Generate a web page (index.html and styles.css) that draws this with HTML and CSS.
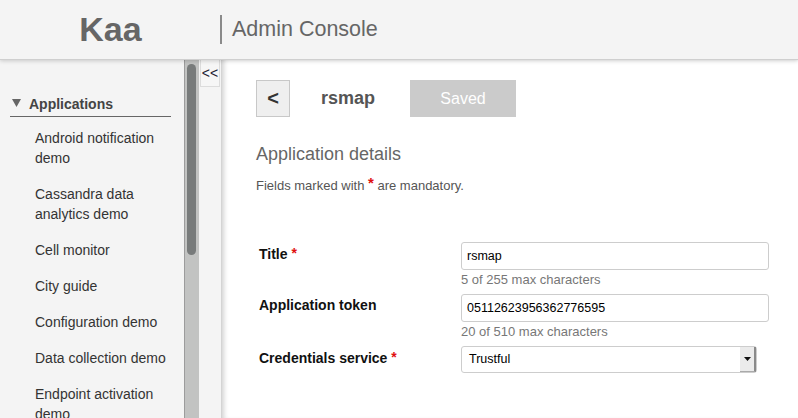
FILE: index.html
```html
<!DOCTYPE html>
<html>
<head>
<meta charset="utf-8">
<link rel="stylesheet" href="styles.css">
</head>
<body>
<header class="topbar">
  <div class="brand">Kaa</div>
  <div class="divider"></div>
  <div class="console">Admin Console</div>
</header>
<div class="main">
  <nav class="sidebar">
    <div class="nav-head">
      <svg class="tri" width="9" height="8" viewBox="0 0 9 8"><path d="M0 0H9L4.5 8Z" fill="#666"/></svg>
      <span>Applications</span>
    </div>
    <ul class="nav-list">
      <li>Android notification demo</li>
      <li>Cassandra data analytics demo</li>
      <li>Cell monitor</li>
      <li>City guide</li>
      <li>Configuration demo</li>
      <li>Data collection demo</li>
      <li>Endpoint activation demo</li>
    </ul>
  </nav>
  <div class="scrollbar"><div class="thumb"></div></div>
  <div class="collapse"><div class="collapse-btn">&lt;&lt;</div></div>
  <main class="content">
    <div class="toolbar">
      <div class="back-btn">&lt;</div>
      <div class="app-name">rsmap</div>
      <div class="saved-btn">Saved</div>
    </div>
    <h2 class="section-title">Application details</h2>
    <p class="note">Fields marked with <span class="req">*</span> are mandatory.</p>
    <div class="form">
      <div class="label">Title <span class="req">*</span></div>
      <div class="field">
        <div class="input">rsmap</div>
        <div class="help">5 of 255 max characters</div>
      </div>
      <div class="label">Application token</div>
      <div class="field">
        <div class="input">05112623956362776595</div>
        <div class="help">20 of 510 max characters</div>
      </div>
      <div class="label">Credentials service <span class="req">*</span></div>
      <div class="field">
        <div class="select"><span class="select-text">Trustful</span><span class="select-arrow"><svg width="7" height="4" viewBox="0 0 7 4"><path d="M0 0H7L3.5 4Z" fill="#111"/></svg></span></div>
      </div>
    </div>
  </main>
</div>
</body>
</html>
```
FILE: styles.css
```css
html, body {
  margin: 0;
  padding: 0;
  height: 418px;
  overflow: hidden;
  font-family: "Liberation Sans", Arial, sans-serif;
  background: #fff;
}

.topbar {
  position: relative;
  z-index: 2;
  height: 59px;
  background: #f4f4f4;
  border-bottom: 1px solid #cfcfcf;
  box-shadow: 0 1px 4px rgba(0, 0, 0, 0.18);
  display: flex;
  align-items: center;
}

.brand {
  width: 220px;
  text-align: center;
  font-size: 34px;
  font-weight: bold;
  color: #666;
  line-height: 59px;
  padding-left: 1px;
  box-sizing: border-box;
}

.divider {
  width: 2px;
  height: 29px;
  background: #8a8a8a;
  margin-top: -1px;
}

.console {
  margin-left: 10px;
  font-size: 21.5px;
  color: #666;
  line-height: 59px;
}

.main {
  display: flex;
  height: 358px;
}

.sidebar {
  width: 184px;
  background: #f4f4f4;
  padding-top: 34px;
  box-sizing: border-box;
  overflow: hidden;
}

.nav-head {
  margin: 0 13px 0 10px;
  height: 20px;
  padding-bottom: 2px;
  border-bottom: 1px solid #666;
  display: flex;
  align-items: center;
  font-size: 14px;
  font-weight: bold;
  color: #444;
  line-height: 20px;
}

.tri {
  margin-left: 2px;
  margin-right: 8px;
  margin-top: -2px;
}

.nav-list {
  list-style: none;
  margin: 3px 0 0 0;
  padding: 0;
}

.nav-list li {
  padding: 8px 9px 8px 35px;
  font-size: 14px;
  line-height: 20px;
  color: #333;
}

.scrollbar {
  width: 14px;
  background: #c2c3c2;
  border-left: 1px solid #9c9c9c;
  padding-top: 4px;
}

.thumb {
  margin-left: 2px;
  width: 9px;
  height: 191px;
  border-radius: 5px;
  background: #787b7b;
}

.collapse {
  width: 22px;
  background: #f4f4f4;
  border-right: 1px solid #d4d4d4;
}

.collapse-btn {
  margin-left: 1px;
  width: 20px;
  height: 27px;
  box-sizing: border-box;
  border: 1px solid #dcdcdc;
  border-top: none;
  background: #f6f6f6;
  font-size: 14px;
  line-height: 26px;
  text-align: center;
  color: #223;
}

.content {
  flex: 1;
  background: #fff;
  box-shadow: inset 5px 0 5px -3px rgba(0, 0, 0, 0.18);
  padding: 20px 0 0 34px;
}

.toolbar {
  display: flex;
  align-items: center;
  height: 37px;
}

.back-btn {
  width: 34px;
  height: 37px;
  box-sizing: border-box;
  border: 1px solid #c8c8c8;
  background: #efefef;
  font-size: 20px;
  font-weight: bold;
  color: #333;
  text-align: center;
  line-height: 34px;
}

.app-name {
  margin-left: 31px;
  font-size: 18px;
  font-weight: bold;
  color: #555;
}

.saved-btn {
  margin-left: 35px;
  width: 106px;
  height: 37px;
  background: #cbcbcb;
  color: #fff;
  font-size: 16px;
  text-align: center;
  line-height: 37px;
}

.section-title {
  margin: 26px 0 0 0;
  font-size: 18px;
  font-weight: normal;
  line-height: 22px;
  color: #666;
}

.note {
  margin: 10px 0 0 0;
  font-size: 13px;
  line-height: 16px;
  color: #555;
}

.note .req {
  font-size: 15px;
  vertical-align: 2px;
}

.req {
  color: #e01010;
  font-weight: bold;
}

.form {
  margin: 48px 0 0 3px;
  display: grid;
  grid-template-columns: 202px 308px;
  row-gap: 6px;
}

.label {
  padding-top: 3px;
  font-size: 14px;
  font-weight: bold;
  line-height: 16px;
  color: #111;
}

.label .req {
  font-size: 14px;
  vertical-align: 1px;
}

.input {
  height: 28px;
  box-sizing: border-box;
  border: 1px solid #cdcdcd;
  border-radius: 3px;
  padding-left: 5px;
  font-size: 12.5px;
  line-height: 26px;
  color: #000;
}

.help {
  margin-top: 2px;
  font-size: 13px;
  line-height: 16px;
  color: #777;
}

.select {
  width: 296px;
  height: 27px;
  box-sizing: border-box;
  border: 1px solid #cdcdcd;
  border-radius: 3px;
  display: flex;
  align-items: stretch;
}

.select-text {
  flex: 1;
  padding-left: 7px;
  font-size: 12.5px;
  line-height: 25px;
  color: #000;
}

.select-arrow {
  width: 14px;
  background: #ebebeb;
  border-right: 2px solid #8a8a8a;
  border-bottom: 1px solid #aaa;
  display: flex;
  align-items: center;
  justify-content: center;
}
```
